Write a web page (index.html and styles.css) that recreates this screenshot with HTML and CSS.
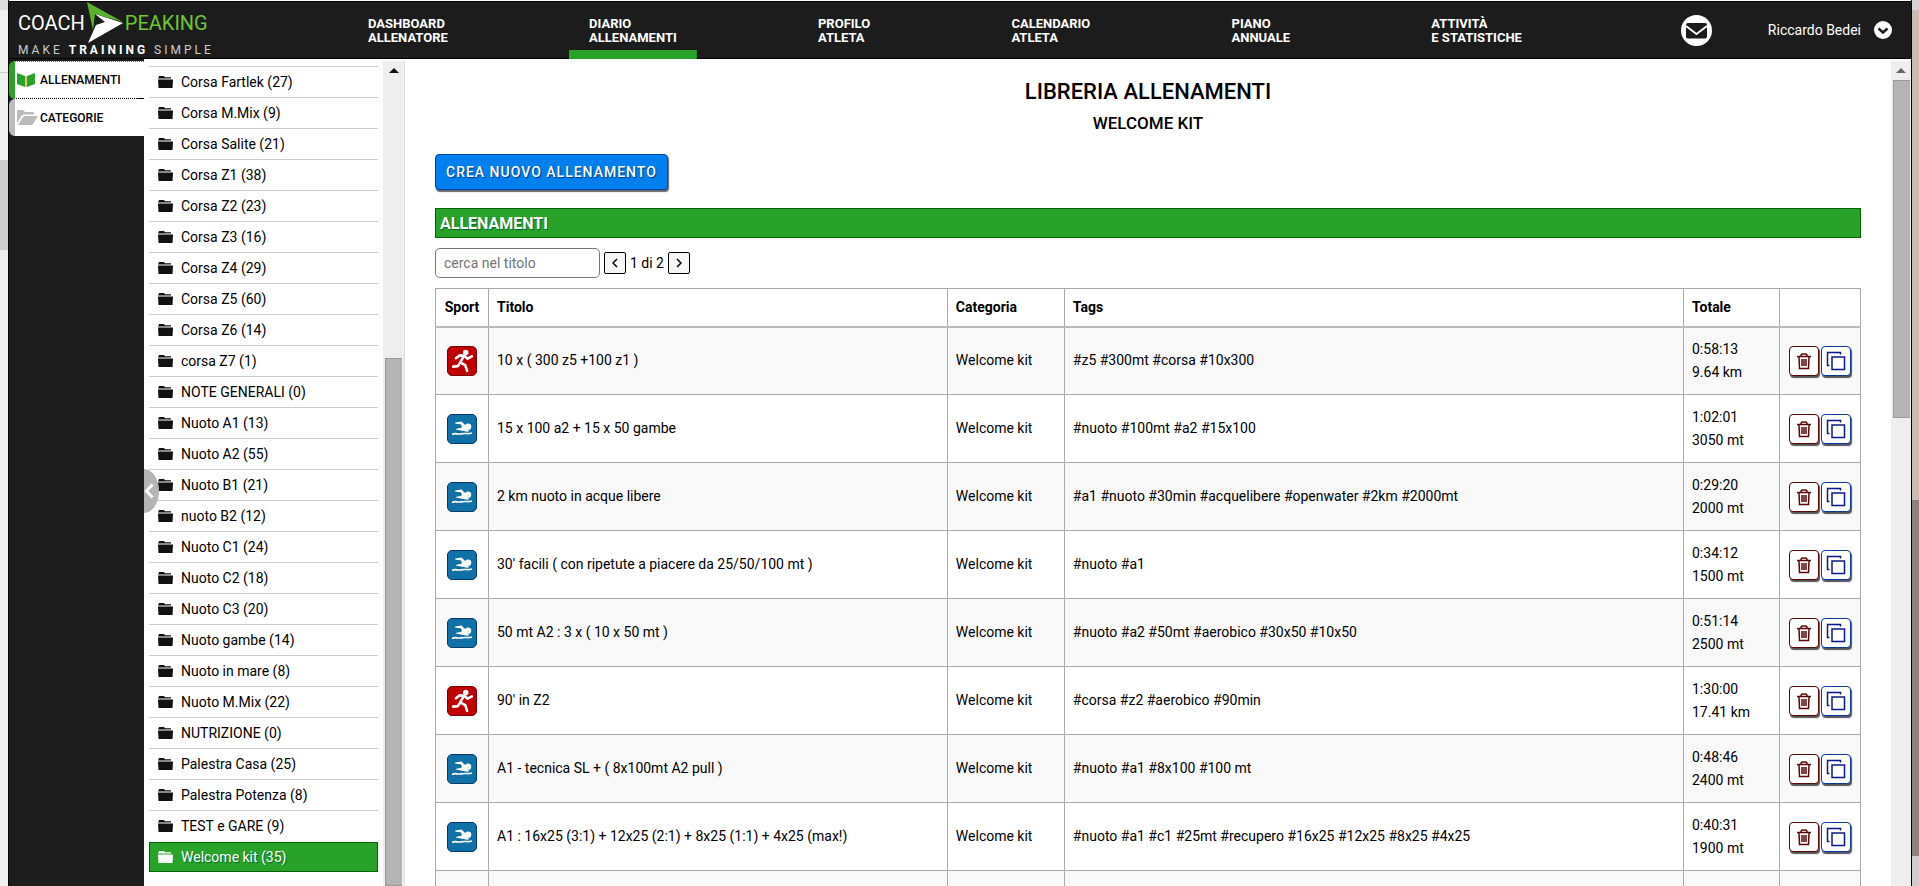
FILE: index.html
```html
<!DOCTYPE html>
<html lang="it">
<head>
<meta charset="utf-8">
<title>Coach Peaking - Libreria allenamenti</title>
<link rel="stylesheet" href="styles.css">
</head>
<body>
<svg class="symbols" aria-hidden="true">
  <symbol id="folder" viewBox="0 0 15 12"><path d="M1 0h5l1 1.200h6v1.300H0z"/><path d="M0 3.500h15l-.5 8.500H.5z"/></symbol>
  <symbol id="run" viewBox="0 0 30 30"><circle cx="19" cy="6" r="3"/><path d="M8.500 12l4-3 5 .500 3.500 3 4.500-2.500M16.500 10.500l-3.500 6 5.500 3 2 6M13.500 16l-3 4.500-5 .5" fill="none" stroke="#fff" stroke-width="2.800" stroke-linecap="round" stroke-linejoin="round"/></symbol>
  <symbol id="swim" viewBox="0 0 30 30"><circle cx="21.500" cy="12.500" r="3.400"/><path d="M7.500 8l7-1 4 4 1.500 4.500 3 1.500-2 1-6-1-7-1.500 2-1 4-.5 1-2-1.500-2-5.500-.5z"/><path d="M5 20.500c3-1.500 5 .5 9-.3 4-1 7 .3 11-.7" fill="none" stroke="#fff" stroke-width="1.800" stroke-linecap="round"/></symbol>
  <symbol id="trash" viewBox="0 0 16 18"><path d="M1 4.500h14M5 4q0-2 1.500-2h3Q11 2 11 4M3 5l.5 11.500h9L13 5M6 7v7M8 7v7M10 7v7" fill="none" stroke="#5a0808" stroke-width="1.500"/></symbol>
  <symbol id="copy" viewBox="0 0 20 20"><path d="M6 6h12.500v12.500H6zM3.500 14.500h-2v-13h13v2" fill="none" stroke="#0a1a8c" stroke-width="1.500"/></symbol>
</svg>
<div class="edge edge-left"></div>
<div class="app">
  <header class="topbar">
    <a class="logo" href="#">
      <span class="brand"><span>COACH</span><svg viewBox="0 0 36 42" aria-hidden="true"><path d="M0 0l36 20-28-8-2 16z" fill="#5bb030"/><path d="M8 12l28 9L1 41l8-18 9-3z" fill="#fff"/></svg><span class="brand-green">PEAKING</span></span>
      <span class="tagline">MAKE <b>TRAINING</b> SIMPLE</span>
    </a>
    <nav class="nav">
      <a href="#">DASHBOARD<br>ALLENATORE</a>
      <a href="#" class="active">DIARIO<br>ALLENAMENTI</a>
      <a href="#">PROFILO<br>ATLETA</a>
      <a href="#">CALENDARIO<br>ATLETA</a>
      <a href="#">PIANO<br>ANNUALE</a>
      <a href="#">ATTIVITÀ<br>E STATISTICHE</a>
    </nav>
    <div class="account">
      <button class="mail" aria-label="Messaggi"><svg viewBox="0 0 31 31"><circle cx="15.500" cy="15.500" r="15.500" fill="#fff"/><rect x="5" y="8" width="21" height="15.500" rx="2" fill="#1c1c1c"/><path d="M5 11l10.500 8L26 11" fill="none" stroke="#fff" stroke-width="1.800"/></svg></button>
      <button class="user">Riccardo Bedei<svg viewBox="0 0 18 18" aria-hidden="true"><circle cx="9" cy="9" r="9" fill="#fff"/><path d="M4.500 7.500L9 11.500l4.500-4" fill="none" stroke="#1c1c1c" stroke-width="2.500"/></svg></button>
    </div>
  </header>
  <div class="body">
    <nav class="side">
      <a href="#" class="current"><svg viewBox="0 0 18 14" aria-hidden="true"><path d="M0 0l8 3v11l-8-3z" fill="#28a228"/><path d="M18 0l-8 3v11l8-3z" fill="#28a228"/><path d="M8 3h2v11H8z" fill="#e3c76a"/></svg>ALLENAMENTI</a>
      <a href="#"><svg viewBox="0 0 21 15" aria-hidden="true"><path d="M0 13V1.500Q0 0 1.500 0H6l2 2h8q1 0 1 1v1.500H7Q5.500 4.500 4.500 6z" fill="#bbb"/><path d="M1 15l5-8q.6-1 2-1h13l-5 8q-.6 1-2 1z" fill="#bbb"/></svg>CATEGORIE</a>
    </nav>
    <aside class="folders">
      <ul>
        <li><a href="#"><svg><use href="#folder"/></svg>Corsa Fartlek (27)</a></li>
        <li><a href="#"><svg><use href="#folder"/></svg>Corsa M.Mix (9)</a></li>
        <li><a href="#"><svg><use href="#folder"/></svg>Corsa Salite (21)</a></li>
        <li><a href="#"><svg><use href="#folder"/></svg>Corsa Z1 (38)</a></li>
        <li><a href="#"><svg><use href="#folder"/></svg>Corsa Z2 (23)</a></li>
        <li><a href="#"><svg><use href="#folder"/></svg>Corsa Z3 (16)</a></li>
        <li><a href="#"><svg><use href="#folder"/></svg>Corsa Z4 (29)</a></li>
        <li><a href="#"><svg><use href="#folder"/></svg>Corsa Z5 (60)</a></li>
        <li><a href="#"><svg><use href="#folder"/></svg>Corsa Z6 (14)</a></li>
        <li><a href="#"><svg><use href="#folder"/></svg>corsa Z7 (1)</a></li>
        <li><a href="#"><svg><use href="#folder"/></svg>NOTE GENERALI (0)</a></li>
        <li><a href="#"><svg><use href="#folder"/></svg>Nuoto A1 (13)</a></li>
        <li><a href="#"><svg><use href="#folder"/></svg>Nuoto A2 (55)</a></li>
        <li><a href="#"><svg><use href="#folder"/></svg>Nuoto B1 (21)</a></li>
        <li><a href="#"><svg><use href="#folder"/></svg>nuoto B2 (12)</a></li>
        <li><a href="#"><svg><use href="#folder"/></svg>Nuoto C1 (24)</a></li>
        <li><a href="#"><svg><use href="#folder"/></svg>Nuoto C2 (18)</a></li>
        <li><a href="#"><svg><use href="#folder"/></svg>Nuoto C3 (20)</a></li>
        <li><a href="#"><svg><use href="#folder"/></svg>Nuoto gambe (14)</a></li>
        <li><a href="#"><svg><use href="#folder"/></svg>Nuoto in mare (8)</a></li>
        <li><a href="#"><svg><use href="#folder"/></svg>Nuoto M.Mix (22)</a></li>
        <li><a href="#"><svg><use href="#folder"/></svg>NUTRIZIONE (0)</a></li>
        <li><a href="#"><svg><use href="#folder"/></svg>Palestra Casa (25)</a></li>
        <li><a href="#"><svg><use href="#folder"/></svg>Palestra Potenza (8)</a></li>
        <li><a href="#"><svg><use href="#folder"/></svg>TEST e GARE (9)</a></li>
        <li><a href="#" class="selected"><svg><use href="#folder"/></svg>Welcome kit (35)</a></li>
      </ul>
      <div class="scroll scroll-folders"><i class="arrow"></i><i class="thumb"></i></div>
      <button class="collapse" aria-label="Chiudi elenco"><svg viewBox="0 0 10 16"><path d="M8.500 1.500L2.500 8l6 6.500" fill="none" stroke="#fff" stroke-width="3"/></svg></button>
    </aside>
    <main class="main">
      <div class="content">
        <h1>LIBRERIA ALLENAMENTI</h1>
        <h2>WELCOME KIT</h2>
        <button class="create">CREA NUOVO ALLENAMENTO</button>
        <h3>ALLENAMENTI</h3>
        <div class="tools">
          <input type="text" placeholder="cerca nel titolo" aria-label="cerca nel titolo">
          <button aria-label="Pagina precedente"><svg viewBox="0 0 6 10"><path d="M5 1L1 5l4 4"/></svg></button>
          <span>1 di 2</span>
          <button aria-label="Pagina successiva"><svg viewBox="0 0 6 10"><path d="M1 1l4 4-4 4"/></svg></button>
        </div>
        <table>
          <colgroup><col class="c-sport"><col class="c-title"><col class="c-cat"><col><col class="c-total"><col class="c-act"></colgroup>
          <thead><tr><th>Sport</th><th>Titolo</th><th>Categoria</th><th>Tags</th><th>Totale</th><th></th></tr></thead>
          <tbody>
            <tr><td><svg class="sport run"><use href="#run"/></svg></td><td>10 x ( 300 z5 +100 z1 )</td><td>Welcome kit</td><td>#z5 #300mt #corsa #10x300</td><td>0:58:13<br>9.64 km</td><td><div class="acts"><button class="del" aria-label="Elimina"><svg><use href="#trash"/></svg></button><button class="dup" aria-label="Duplica"><svg><use href="#copy"/></svg></button></div></td></tr>
            <tr><td><svg class="sport"><use href="#swim"/></svg></td><td>15 x 100 a2 + 15 x 50 gambe</td><td>Welcome kit</td><td>#nuoto #100mt #a2 #15x100</td><td>1:02:01<br>3050 mt</td><td><div class="acts"><button class="del" aria-label="Elimina"><svg><use href="#trash"/></svg></button><button class="dup" aria-label="Duplica"><svg><use href="#copy"/></svg></button></div></td></tr>
            <tr><td><svg class="sport"><use href="#swim"/></svg></td><td>2 km nuoto in acque libere</td><td>Welcome kit</td><td>#a1 #nuoto #30min #acquelibere #openwater #2km #2000mt</td><td>0:29:20<br>2000 mt</td><td><div class="acts"><button class="del" aria-label="Elimina"><svg><use href="#trash"/></svg></button><button class="dup" aria-label="Duplica"><svg><use href="#copy"/></svg></button></div></td></tr>
            <tr><td><svg class="sport"><use href="#swim"/></svg></td><td>30' facili ( con ripetute a piacere da 25/50/100 mt )</td><td>Welcome kit</td><td>#nuoto #a1</td><td>0:34:12<br>1500 mt</td><td><div class="acts"><button class="del" aria-label="Elimina"><svg><use href="#trash"/></svg></button><button class="dup" aria-label="Duplica"><svg><use href="#copy"/></svg></button></div></td></tr>
            <tr><td><svg class="sport"><use href="#swim"/></svg></td><td>50 mt A2 : 3 x ( 10 x 50 mt )</td><td>Welcome kit</td><td>#nuoto #a2 #50mt #aerobico #30x50 #10x50</td><td>0:51:14<br>2500 mt</td><td><div class="acts"><button class="del" aria-label="Elimina"><svg><use href="#trash"/></svg></button><button class="dup" aria-label="Duplica"><svg><use href="#copy"/></svg></button></div></td></tr>
            <tr><td><svg class="sport run"><use href="#run"/></svg></td><td>90' in Z2</td><td>Welcome kit</td><td>#corsa #z2 #aerobico #90min</td><td>1:30:00<br>17.41 km</td><td><div class="acts"><button class="del" aria-label="Elimina"><svg><use href="#trash"/></svg></button><button class="dup" aria-label="Duplica"><svg><use href="#copy"/></svg></button></div></td></tr>
            <tr><td><svg class="sport"><use href="#swim"/></svg></td><td>A1 - tecnica SL + ( 8x100mt A2 pull )</td><td>Welcome kit</td><td>#nuoto #a1 #8x100 #100 mt</td><td>0:48:46<br>2400 mt</td><td><div class="acts"><button class="del" aria-label="Elimina"><svg><use href="#trash"/></svg></button><button class="dup" aria-label="Duplica"><svg><use href="#copy"/></svg></button></div></td></tr>
            <tr><td><svg class="sport"><use href="#swim"/></svg></td><td>A1 : 16x25 (3:1) + 12x25 (2:1) + 8x25 (1:1) + 4x25 (max!)</td><td>Welcome kit</td><td>#nuoto #a1 #c1 #25mt #recupero #16x25 #12x25 #8x25 #4x25</td><td>0:40:31<br>1900 mt</td><td><div class="acts"><button class="del" aria-label="Elimina"><svg><use href="#trash"/></svg></button><button class="dup" aria-label="Duplica"><svg><use href="#copy"/></svg></button></div></td></tr>
            <tr><td></td><td></td><td></td><td></td><td></td><td></td></tr>
          </tbody>
        </table>
      </div>
      <div class="scroll scroll-main"><i class="arrow"></i><i class="thumb"></i></div>
    </main>
  </div>
</div>
<div class="edge edge-right"></div>
</body>
</html>
```
FILE: styles.css
```css
* { box-sizing: border-box; }
body {
  margin: 0;
  height: 100vh;
  display: flex;
  overflow: hidden;
  background: #fff;
  color: #000;
  font: 14px/20px Roboto, "Liberation Sans", sans-serif;
}
a { color: inherit; text-decoration: none; }
button, input { font: inherit; color: inherit; }
button { padding: 0; cursor: pointer; }
.symbols { position: absolute; width: 0; height: 0; }

.edge { flex: none; width: 8px; }
.edge-left { background: linear-gradient(#ddd 10px, #f0f0f0 10px 72px, #ccc 72px 73px, #f0f0f0 73px 160px, #ccc 160px 250px, #eee 250px); }
.edge-right { width: 7px; background: linear-gradient(#d5d5d5 10px, #c8beb4 10px 500px, #8b847d 500px 856px, #ccc 856px); }

.app {
  flex: 1;
  min-width: 0;
  display: flex;
  flex-direction: column;
  padding-top: 1px;
  border: solid #000;
  border-width: 0 1px;
}

/* top bar */
.topbar {
  flex: none;
  display: flex;
  height: 58px;
  background: #1c1c1c;
  border: solid #000;
  border-width: 1px 0;
  color: #fff;
}
.logo { width: 339px; padding-left: 9px; display: flex; flex-direction: column; }
.brand {
  display: flex;
  align-items: center;
  height: 42px;
  font-size: 20px;
  line-height: 42px;
}
.brand svg { width: 36px; height: 42px; margin: 0 2px; }
.brand-green { color: #6cc832; }
.tagline { font-size: 12px; line-height: 12px; letter-spacing: 3px; color: #ccc; }
.tagline b { color: #fff; }
.nav {
  flex: 1;
  display: flex;
  justify-content: space-between;
  font-size: 13px;
  line-height: 14px;
  font-weight: 700;
}
.nav a { padding: 15px 20px 0; height: 57px; white-space: nowrap; }
.nav .active {
  background: linear-gradient(#28a228, #28a228) bottom / 100% 9px no-repeat;
}
.account {
  flex: none;
  width: 369px;
  padding: 0 19px 0 139px;
  display: flex;
  align-items: center;
  justify-content: space-between;
}
.account button { border: 0; background: none; color: #fff; display: flex; align-items: center; gap: 13px; }
.mail svg { width: 31px; height: 31px; }
.user svg { width: 18px; height: 18px; }

.body { flex: 1; min-height: 0; display: flex; overflow: hidden; }

/* section tabs */
.side { flex: none; width: 135px; padding-top: 2px; background: #1c1c1c; font-size: 12px; font-weight: 500; }
.side a {
  display: flex;
  align-items: center;
  gap: 5px;
  height: 37px;
  padding-left: 2px;
  border-left: 6px solid #bbb;
  border-radius: 6px 0 0 6px;
  background: #fff;
}
.side .current { height: 38px; border-left-color: #28a228; border-bottom: 1px dotted #000; border-top: 1px dotted #28a228; }
.side svg { width: 18px; height: 14px; }
.side a:last-child svg { width: 21px; height: 15px; margin-right: -3px; }

/* category list */
.folders { position: relative; flex: none; display: flex; width: 261px; padding-left: 5px; }
.folders ul { flex: 1; margin: 7px 5px 0 0; padding: 0; list-style: none; }
.folders li { height: 31px; border-top: 1px solid #ccc; }
.folders li:last-child { border-color: transparent; }
.folders a { display: flex; align-items: center; gap: 8px; height: 30px; padding-left: 9px; }
.folders a svg { width: 15px; height: 12px; fill: #111; }
.folders .selected { padding-left: 8px; border: 1px solid #006400; background: #28a228; color: #fff; text-shadow: 1px 1px 1px #063; }
.folders .selected svg { fill: #fff; }
.collapse {
  position: absolute;
  left: 0;
  top: calc(50% - 4px);
  width: 15px;
  height: 44px;
  border: 0;
  border-radius: 0 15px 15px 0 / 0 22px 22px 0;
  background: #b4b4b4;
}
.collapse svg { display: block; width: 10px; height: 16px; }

.scroll { flex: none; display: flex; flex-direction: column; align-items: center; background: #eee; width: 22px; margin-top: 2px; }
.scroll-folders { border-right: 1px solid #ddd; }
.scroll-main { width: 20px; }
.arrow { margin: 7px 0 7px; border: 5px solid transparent; border-top: 0; border-bottom-color: #111; }
.scroll-main .arrow { border-bottom-color: #666; }
.thumb { display: block; width: 17px; background: #b4b4b4; border: 1px solid #999; border-width: 1px 0 1px 1px; }
.scroll-folders .thumb { margin-top: auto; height: 64%; }
.scroll-main .thumb { height: 41%; }

/* library */
.main { flex: 1; min-width: 0; display: flex; }
.content { flex: 1; min-width: 0; padding: 18px 30px 0; }
h1, h2, h3 { margin: 0; font-weight: 500; }
h1 { text-align: center; font-size: 22px; line-height: 30px; }
h2 { margin-top: 4px; text-align: center; font-size: 17px; line-height: 24px; }
.create {
  display: block;
  height: 36px;
  margin: 19px 0 18px;
  padding: 0 10px;
  border: 1px solid #0046a8;
  border-radius: 4px;
  background: #007fee;
  box-shadow: 1px 2px 1px #666;
  color: #fff;
  font-weight: 500;
  letter-spacing: 1px;
  text-shadow: 1px 1px 1px #003a8c;
}
h3 {
  height: 30px;
  padding: 0 4px;
  border: 1px solid #006400;
  background: #28a228;
  color: #fff;
  font-size: 16px;
  line-height: 30px;
  font-weight: 700;
  text-shadow: 1px 1px 1px #063;
}
.tools { display: flex; align-items: center; gap: 4px; margin: 10px 0; }
.tools input { width: 165px; height: 30px; padding: 0 8px; border: 1px solid #777; border-radius: 5px; }
.tools input::placeholder { color: #757575; }
.tools button { display: grid; place-items: center; width: 22px; height: 22px; border: 1px solid #000; border-radius: 2px; background: #f6f6f6; }
.tools button svg { width: 6px; height: 10px; fill: none; stroke: #000; stroke-width: 1.5; }

table { width: 100%; table-layout: fixed; border-collapse: collapse; }
.c-sport { width: 53px; }
.c-title { width: 32.2%; }
.c-cat { width: 117px; }
.c-total { width: 96px; }
.c-act { width: 81px; }
th, td { padding: 0 8px; border: 1px solid #aaa; text-align: left; }
th { height: 38px; border-bottom: 2px solid #bbb; font-weight: 700; }
td { height: 68px; line-height: 23px; }
tbody tr:nth-child(odd) { background: #f9f9f9; }
th:first-child { text-align: center; padding: 0; }
td:first-child { padding: 0 11px; }
td:last-child { padding-left: 9px; }
.sport { display: block; width: 30px; height: 30px; border: 1px solid #013a68; border-radius: 5px; background: #1070a8; fill: #fff; }
.sport.run { border-color: #7c0000; background: #c00000; }
.acts { display: flex; gap: 2px; }
.acts button { display: grid; place-items: center; width: 30px; height: 30px; border: 1px solid #0a3a9c; border-radius: 4px; background: #fff; box-shadow: 1px 2px 1px #555; }
.acts .del { border-color: #5a0808; }
.del svg { width: 16px; height: 18px; }
.dup svg { width: 20px; height: 20px; }
```
